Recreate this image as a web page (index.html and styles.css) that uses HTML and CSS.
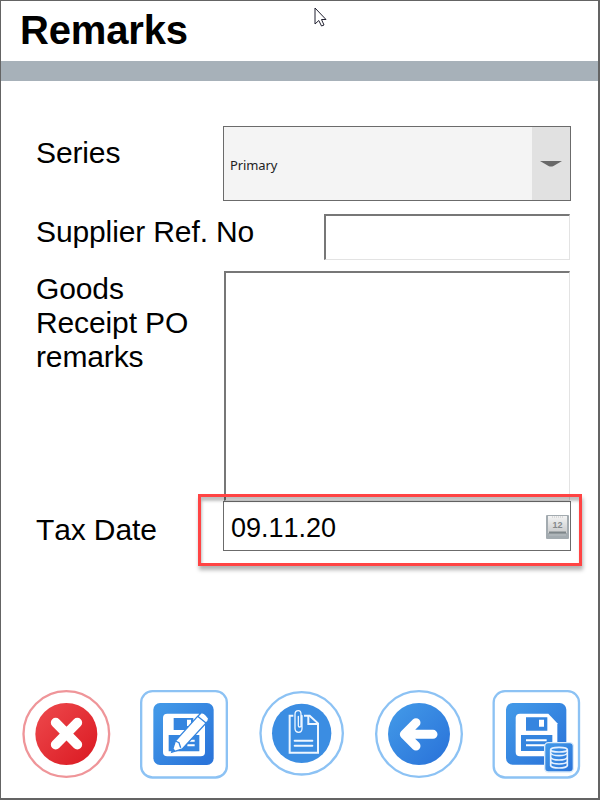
FILE: index.html
```
<!DOCTYPE html>
<html lang="en">
<head>
<meta charset="utf-8">
<title>Remarks</title>
<link rel="stylesheet" href="styles.css">
</head>
<body>
<main class="window">
  <header class="title"><h1>Remarks</h1></header>
  <div class="bar"></div>
  <section class="form">
    <div class="row row-series">
      <div class="label">Series</div>
      <div class="select"><span class="value">Primary</span><span class="drop"><svg width="22" height="6" viewBox="0 0 22 6"><path d="M0 0H22L13.5 5Q11 6 8.500 5Z" fill="#696969"/></svg></span></div>
    </div>
    <div class="row row-ref">
      <div class="label">Supplier Ref. No</div>
      <div class="field"></div>
    </div>
    <div class="row row-remarks">
      <div class="label">Goods Receipt PO remarks</div>
      <div class="field"></div>
    </div>
    <div class="row row-date">
      <div class="label">Tax Date</div>
      <div class="date"><span>09.11.20</span>
        <svg width="23" height="24" viewBox="0 0 23 24">
          <defs><linearGradient id="cal" x2="0" y2="1"><stop offset="0" stop-color="#f4f4f4"/><stop offset="1" stop-color="#c9cbcc"/></linearGradient></defs>
          <rect width="23" height="24" rx="1" fill="#a3abb0"/>
          <rect x="2" y="1" width="19" height="17" fill="url(#cal)"/>
          <path d="M6 2h11" stroke="#c4c4c4" stroke-dasharray="1 1"/>
          <path d="M3 17.500h17" stroke="#7e868a" stroke-width="2"/>
          <path d="M3 20h17" stroke="#b8bec1"/>
          <text x="11.500" y="13" text-anchor="middle" class="cal-day">12</text>
        </svg>
      </div>
      <div class="highlight"></div>
    </div>
  </section>
  <footer class="actions">
    <svg class="icon" viewBox="33 27 270 270">
      <defs>
        <linearGradient id="red" x2="1" y2="1"><stop offset=".1" stop-color="#ec4549"/><stop offset=".9" stop-color="#dc1d25"/></linearGradient>
        <linearGradient id="blue" x2="1" y2="1"><stop offset=".1" stop-color="#4197e7"/><stop offset=".9" stop-color="#2b75da"/></linearGradient>
      </defs>
      <circle cx="169" cy="162" r="128.500" fill="#fff" stroke="#ef9599" stroke-width="7"/>
      <circle cx="169" cy="162" r="93" fill="url(#red)"/>
      <path d="M137 128L202 194M202 128L137 194" stroke="#fff" stroke-width="29" stroke-linecap="round"/>
    </svg>
    <svg class="icon" viewBox="27 27 270 270">
      <rect x="33.500" y="33.500" width="257" height="259" rx="34" fill="#fff" stroke="#8cc2f4" stroke-width="7"/>
      <rect x="70" y="69" width="181" height="186" rx="20" fill="url(#blue)"/>
      <path d="M112 101H207L225 121V216Q225 229 212 229H112Q99 229 99 216V114Q99 101 112 101Z" fill="#fff"/>
      <path d="M131 114H190V150H131ZM116 165H208V214H116Z" fill="#3585df"/>
      <path d="M171 119h12v19h-12zM172 179h22v6h-22zM172 193h22v6h-22z" fill="#fff"/>
      <path d="M125 217L136 183L202 110L213 99Q220 96 228 105L236 115L234 123L157 207Z" fill="#fff" stroke="#3585df" stroke-width="4"/>
      <path d="M203 109L228 129M136 183L147 188L152 203" fill="none" stroke="#3585df" stroke-width="4"/>
      <path d="M125 217L130 205L136 212Z" fill="#3585df"/>
    </svg>
    <svg class="icon" viewBox="21 27 270 270">
      <circle cx="155" cy="160" r="123.500" fill="#fff" stroke="#8cc2f4" stroke-width="7"/>
      <circle cx="155" cy="160" r="89" fill="#3b8de2"/>
      <g fill="none" stroke="#eef6ff">
        <path d="M130 107H119V218H204V130L179 107H162" stroke-width="6"/>
        <path d="M175 107V132H203" stroke-width="6"/>
        <path d="M134 182H187M134 197H187" stroke-width="6" stroke-linecap="round"/>
        <path d="M156 107V145Q156 157 146 157Q135 157 135 145V103Q135 92 145 92Q153 92 153 103V137Q153 141 149 141Q145 141 145 137V109" stroke-width="4" stroke-linecap="round"/>
      </g>
    </svg>
    <svg class="icon" viewBox="27 27 270 270">
      <circle cx="162" cy="162" r="128.500" fill="#fff" stroke="#8cc2f4" stroke-width="7"/>
      <circle cx="162" cy="162" r="93" fill="url(#blue)"/>
      <path d="M204 163H121M153 128L118 163L153 198" fill="none" stroke="#fff" stroke-width="27" stroke-linecap="round" stroke-linejoin="round"/>
    </svg>
    <svg class="icon" viewBox="18 27 270 270">
      <rect x="26" y="33.500" width="256" height="259" rx="34" fill="#fff" stroke="#8cc2f4" stroke-width="7"/>
      <rect x="63" y="69" width="181" height="185" rx="20" fill="url(#blue)"/>
      <path d="M105 101H190L217 130V229H105Q92 229 92 216V114Q92 101 105 101Z" fill="#fff"/>
      <path d="M123 112H187V152H123ZM108 165H202V213H108Z" fill="#3585df"/>
      <path d="M162 119h15v21h-15zM123 178h62v6h-62zM123 193h62v6h-62z" fill="#fff"/>
      <rect x="179" y="188" width="86" height="88" rx="11" fill="url(#blue)" stroke="#d8eafb" stroke-width="4"/>
      <g fill="none" stroke="#e6f1ff" stroke-width="5">
        <ellipse cx="222" cy="209" rx="25" ry="7"/>
        <path d="M197 209V257Q200 264 222 264Q244 264 247 257V209M197 219Q201 227 222 227Q243 227 247 219M197 232Q201 240 222 240Q243 240 247 232M197 245Q201 252 222 252Q243 252 247 245"/>
      </g>
    </svg>
  </footer>
  <svg class="cursor" width="14" height="21" viewBox="0 0 14 21"><path d="M1 1V17L4.800 13.500L7.500 19L10 18L7.500 12.500H12Z" fill="#fff" stroke="#202030"/></svg>
</main>
</body>
</html>
```
FILE: styles.css
```
* { box-sizing: border-box; }
body { margin: 0; font-family: "Liberation Sans", Arial, sans-serif; font-kerning: none; color: #000; }
.window {
  position: relative;
  display: flex;
  flex-direction: column;
  width: 600px;
  height: 800px;
  background: #fff;
  border: 1px solid #646464;
  border-right-width: 2px;
  border-bottom-width: 2px;
}
.title { height: 60px; padding: 6px 0 0 19px; }
.title h1 { margin: 0; font-size: 40px; line-height: 46px; letter-spacing: -.15px; }
.bar { height: 20px; background: #a7b1b9; }
.form { padding: 45px 27px 0 35px; }
.row { display: flex; justify-content: space-between; }
.label { font-size: 30px; line-height: 34px; letter-spacing: -.12px; white-space: nowrap; }
.row-series { height: 88px; }
.row-series .label { padding-top: 10px; }
.select {
  display: flex;
  width: 348px;
  height: 75px;
  border: 1px solid #6b6b6b;
  background: #f4f4f4;
}
.value {
  flex: 1;
  padding: 2px 0 0 6px;
  font: 13px/73px "Noto Sans", sans-serif;
  letter-spacing: -.1px;
  color: #222;
}
.drop {
  display: flex;
  align-items: center;
  justify-content: center;
  width: 38px;
  background: #e1e1e1;
}
.row-ref { height: 57px; padding-right: 1px; }
.row-ref .label { padding-top: 1px; }
.field {
  width: 346px;
  border: 1px solid #e3e3e3;
  border-top: 2px solid #777;
  border-left: 2px solid #777;
}
.row-ref .field { width: 246px; height: 46px; }
.row-remarks { height: 230px; padding-right: 1px; }
.row-remarks .label { width: 160px; padding-top: 1px; white-space: normal; }
.row-date { position: relative; height: 50px; }
.row-date .label { padding-top: 12px; }
.date {
  display: flex;
  align-items: center;
  justify-content: space-between;
  width: 348px;
  height: 50px;
  padding: 2px 1px 0 7px;
  border: 1px solid #6b6b6b;
  font-size: 27px;
}
.date span { padding-top: 2px; }
.cal-day { font: bold 9px "Liberation Sans", sans-serif; fill: #85898c; }
.highlight {
  position: absolute;
  left: 162px;
  top: -7px;
  width: 384px;
  height: 72px;
  border: 3px solid #ff4444;
  box-shadow: 1px 4px 4px rgba(0, 0, 0, .3), inset 1px 4px 3px rgba(0, 0, 0, .25);
}
.actions {
  display: grid;
  grid-template-columns: 118px 118px 117px 117px 90px;
  margin: auto 0 19px 20px;
}
.icon { width: 90px; height: 90px; }
.cursor { position: absolute; left: 313px; top: 6px; }
```
